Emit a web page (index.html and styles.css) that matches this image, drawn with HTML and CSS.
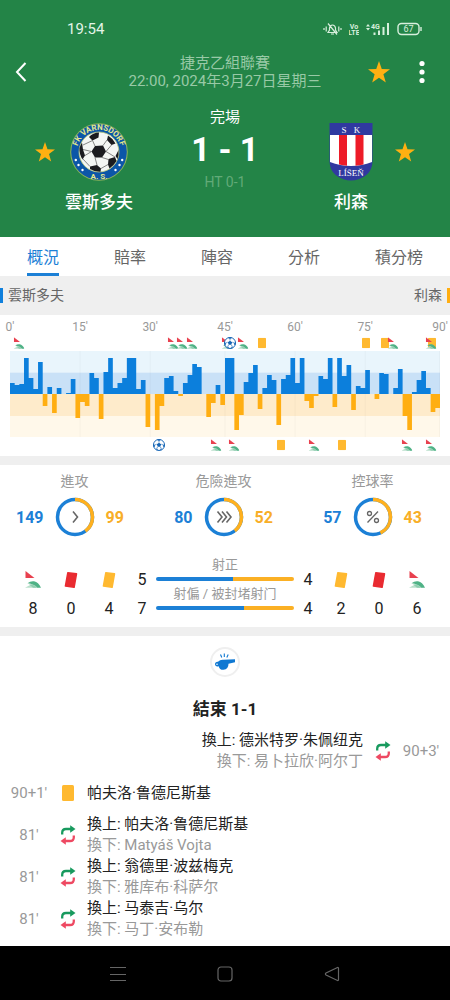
FILE: index.html
```html
<!DOCTYPE html>
<html lang="zh-Hant">
<head>
<meta charset="utf-8">
<meta name="viewport" content="width=device-width, initial-scale=1">
<title>雲斯多夫 1 - 1 利森</title>
<link rel="stylesheet" href="styles.css">
</head>
<body>
<svg class="sprite" aria-hidden="true">
  <symbol id="star" viewBox="0 0 20 20"><path fill="#feb012" d="M10 0l2.500 7.200 7.500.2-6 4.600 2.200 7.500L10 15.200 3.800 19.500 6 12 0 7.400l7.500-.2z"/></symbol>
  <symbol id="corner" viewBox="0 0 16 17">
    <path fill="#e8414f" d="M.5 0l9 7h-9z"/>
    <path fill="#b9dfcb" d="M0 16.800L7 13l7 3.800z"/>
    <path fill="#4fb286" d="M2.500 12.300Q5.500 9.800 9 10.300q4.500.8 7 6.500h-3.500Q9 13 2.500 12.300z"/>
    <path fill="#8fceb0" d="M4 13.200q5 .2 8 3.600H8z"/>
  </symbol>
  <symbol id="card" viewBox="0 0 12 16"><rect width="12" height="16" rx="1.500" fill="#ffb930"/></symbol>
  <symbol id="tilt-yellow" viewBox="0 0 14 18"><path fill="#ffb930" stroke="#ffb930" stroke-width="1.500" stroke-linejoin="round" d="M3.800 1.800l8.700 1-2.400 13.500-8.700-1.200z"/></symbol>
  <symbol id="tilt-red" viewBox="0 0 14 18"><path fill="#e92b31" stroke="#e92b31" stroke-width="1.500" stroke-linejoin="round" d="M3.800 1.800l8.700 1-2.400 13.500-8.700-1.200z"/></symbol>
  <symbol id="ball" viewBox="0 0 14 14">
    <circle cx="7" cy="7" r="6" fill="#fff" stroke="#1565b5" stroke-width="1"/>
    <path fill="#1565b5" d="M7 4.600l2.300 1.700-.9 2.700H5.600l-.9-2.700zM4.500 1.400L7 2.700l2.500-1.300L7 .8zM1 6l1.600 1L2.300 9.500 1 8.500zM13 6l-1.600 1 .3 2.500L13 8.500zM4 12.600l.5-1.900 2 1zM10 12.600l-.5-1.900-2 1z"/>
    <path stroke="#1565b5" stroke-width=".7" d="M7 4.400V2.500M4.500 6.200L2.500 7M9.500 6.200l2 .8M5.500 9.100l-1.100 1.800M8.500 9.100l1.100 1.800"/>
  </symbol>
  <symbol id="swap" viewBox="0 0 16 20">
    <path fill="none" stroke="#189a5e" stroke-width="2.300" d="M2.200 9.500V7.800Q2.200 4 6 4h5"/><path fill="#189a5e" d="M10.200.3l5.300 3.700-5.300 3.700z"/>
    <path fill="none" stroke="#ee4962" stroke-width="2.300" d="M13.800 10.500v1.700q0 3.800-3.800 3.800H5"/><path fill="#ee4962" d="M5.800 12.300L.5 16l5.300 3.700z"/>
  </symbol>
</svg>

<header class="hero">
  <div class="status">
    <span class="clock">19:54</span>
    <div class="status-icons">
      <svg width="19" height="14" viewBox="0 0 19 14" fill="none" stroke="#d8efdd" stroke-width="1.200"><path d="M1 6v2M3.200 4.500v5M18 6v2M15.800 4.500v5M5 10.500h9L12.500 8V6Q12 3 9.500 3T6.500 6v2zM8 12h3M5 1.500l9 11"/></svg>
      <svg class="tiny" width="10" height="14" viewBox="0 0 10 14"><text x="5" y="6.500">Vo</text><text x="5" y="13">LTE</text></svg>
      <svg class="tiny net" width="24" height="14" viewBox="0 0 24 14"><path d="M0 4.500L2 2l2 2.500zM0 6l2 2.500L4 6z"/><text x="9.500" y="7">4G</text><path d="M7.500 10.500h2V13h-2zM12 8.500h2V13h-2zM16.500 5h2v8h-2zM21 1h2v12h-2z"/></svg>
      <svg class="tiny battery" width="26" height="14" viewBox="0 0 26 14"><rect x="1" y="1.500" width="21" height="11" rx="3.500"/><path d="M24 5v4"/><text x="11.500" y="10.300">67</text></svg>
    </div>
  </div>
  <div class="toolbar">
    <button class="icon-btn back" aria-label="返回"><svg width="12" height="20" viewBox="0 0 12 20"><path d="M10.500 1L2 10l8.500 9" fill="none" stroke="#fff" stroke-width="2"/></svg></button>
    <div class="league"><div>捷克乙組聯賽</div><div>22:00, 2024年3月27日星期三</div></div>
    <div class="actions">
      <button class="icon-btn" aria-label="收藏"><svg width="22" height="22"><use href="#star"/></svg></button>
      <button class="icon-btn" aria-label="更多"><svg width="6" height="24" viewBox="0 0 6 24" fill="#fff"><circle cx="3" cy="3.500" r="2.600"/><circle cx="3" cy="12" r="2.600"/><circle cx="3" cy="20.500" r="2.600"/></svg></button>
    </div>
  </div>
  <div class="match">
    <button class="icon-btn fav" aria-label="收藏雲斯多夫"><svg width="20" height="20"><use href="#star"/></svg></button>
    <div class="team">
      <svg class="crest" width="58" height="58" viewBox="0 0 58 58">
        <circle cx="29" cy="29" r="28.800" fill="#8fb35c"/><circle cx="29" cy="29" r="27.800" fill="#0c56a8"/>
        <circle cx="29" cy="29" r="20" fill="#f4f6f4" stroke="#b9c878" stroke-width=".8"/>
        <g fill="#1b1b1f"><path d="M25 23l8-.5 3 6-4 6h-7l-3.500-6z"/><path d="M19 14q4-4.500 10-4.500l-.5 5-6 3zM38 12.500q5 3 7.500 8l-4 1.500-4.500-5zM9.500 25q1-3 2.500-5.500l1 7 2 6-2.500 4Q9 31 9.500 25zM48.500 27q.5 5-1 9l-2-3zM38.500 36l6.500-2 1.500 4q-3 5-7 7.500l-1.500-4zM20 43.500l7-1.500 4 3.500-.5 3.200q-6 .3-10.500-2.700z"/></g>
        <path stroke="#555" stroke-width=".7" fill="none" d="M25 23l-2.500-5.500M33 22.500l4-5.500M36 28.500l5.500-6.500M36 28.500l9 5.500M32 34.500l6.500 2M25 34.500L27 42M21.500 28.500L15 32.500M21.500 28.500L13 26.500M22.500 17.500L13 22M20 43.500l-7.500-8M31 45.500l7-4"/>
        <path id="ring-top" fill="none" d="M9.600 39.300a22 22 0 1 1 38.800 0"/>
        <text class="crest-text"><textPath href="#ring-top" startOffset="50%">FK VARNSDORF</textPath></text>
        <text class="crest-text" x="29" y="55.500">A. S.</text>
        <g fill="#fff"><circle cx="5.800" cy="37" r="1.200"/><circle cx="8.500" cy="42" r="1.200"/><circle cx="12.500" cy="47" r="1.200"/><circle cx="52.200" cy="37" r="1.200"/><circle cx="49.500" cy="42" r="1.200"/><circle cx="45.500" cy="47" r="1.200"/></g>
      </svg>
      <div class="team-name">雲斯多夫</div>
    </div>
    <div class="result">
      <div class="state">完場</div>
      <div class="score">1 - 1</div>
      <div class="half">HT 0-1</div>
    </div>
    <div class="team">
      <svg class="crest" width="44" height="58" viewBox="0 0 44 58">
        <path fill="#3039a0" d="M.5 0h43v39q-1 13-14 17.200-7.500 2.500-15 0Q1.500 52 .5 39z"/>
        <path fill="#fff" d="M1 12h42v27q-10 4-21 4T1 39z"/>
        <path fill="#ed1b28" d="M10 12h8v30.700q-4-.3-8-1.200zM26.500 12h8v29.500q-4 1-8 1.200z"/>
        <text class="shield-text" x="15" y="9.500">S</text><text class="shield-text" x="28" y="9.500">K</text>
        <text class="shield-text" x="22" y="52.500">LÍŠEŇ</text>
      </svg>
      <div class="team-name">利森</div>
    </div>
    <button class="icon-btn fav" aria-label="收藏利森"><svg width="20" height="20"><use href="#star"/></svg></button>
  </div>
</header>

<nav class="tabs">
  <a href="#" class="active" aria-current="page">概況</a><a href="#">賠率</a><a href="#">陣容</a><a href="#">分析</a><a href="#">積分榜</a>
</nav>

<main>
  <div class="sides"><span class="side home">雲斯多夫</span><span class="side guest">利森</span></div>

  <section class="momentum">
    <div class="track labels">
      <span style="left:0%">0'</span><span style="left:16.3%">15'</span><span style="left:32.6%">30'</span><span style="left:50%">45'</span><span style="left:66.3%">60'</span><span style="left:82.6%">75'</span><span style="left:100%">90'</span>
    </div>
    <div class="track marks">
      <svg class="m-corner" style="left:2.1%"><use href="#corner"/></svg>
      <svg class="m-corner" style="left:37.9%"><use href="#corner"/></svg>
      <svg class="m-corner" style="left:40.1%"><use href="#corner"/></svg>
      <svg class="m-corner" style="left:42.3%"><use href="#corner"/></svg>
      <svg class="m-corner" style="left:50.5%"><use href="#corner"/></svg>
      <svg class="m-ball" style="left:51.1%"><use href="#ball"/></svg>
      <svg class="m-corner" style="left:54.3%"><use href="#corner"/></svg>
      <svg class="m-card" style="left:58.7%"><use href="#card"/></svg>
      <svg class="m-card" style="left:82.7%"><use href="#card"/></svg>
      <svg class="m-card" style="left:87.1%"><use href="#card"/></svg>
      <svg class="m-corner" style="left:89.1%"><use href="#corner"/></svg>
      <svg class="m-card" style="left:98.1%"><use href="#card"/></svg>
      <svg class="m-corner" style="left:97.9%"><use href="#corner"/></svg>
    </div>
    <svg class="plot" viewBox="0 0 92 86" preserveAspectRatio="none" role="img" aria-label="進攻走勢">
      <path fill="#e9f5fc" d="M0 0h92v21.500H0z"/><path fill="#c9e1f7" d="M0 21.500h92V43H0z"/>
      <path fill="#feebcb" d="M0 43h92v22H0z"/><path fill="#fff8ea" d="M0 65h92v21H0z"/>
      <path stroke="#000" stroke-opacity=".06" stroke-width=".2" d="M15 0v86M30 0v86M46 0v86M61 0v86M76 0v86M91.900 0v86"/>
      <path fill="#0c7fdc" d="M0 43V32h1V34h1V33h1V7h1V27h1V38h1V11h1V43h1V36h1V43h1V37h1V43h1V42h1V28h1V43h3V22h1V27h1V43h1V21h1V7h1V37h1V32h1V27h1V7h2V38h1V29h1V43h4V27h1V25h1V40h1V43h1V32h1V24h1V13h1V16h1V43h3V34h1V43h1V7h2V43h2V31h1V22h1V14h1V43h1V37h1V24h1V29h1V43h1V28h1V24h1V7h1V32h1V7h1V43h3V25h1V28h1V7h1V43h1V7h1V25h1V14h1V43h1V35h1V37h1V19h1V43h2V22h1V23h1V43h1V37h1V18h1V43h2V41h1V29h1V20h1V37h1V43z"/>
      <path fill="#ffae12" d="M7 43v12h1V43h1v19h1V43h4v24h1V51h1v4h1V43h2v25h1V43h9v33h1V43h1v36h1V55h1V43h3v2h1V43h5v23h1V52h1V43h1v11h1V43h2v36h1V64h1V43h3v15h1V43h3v31h1V43h5v7h1v7h1V45h1V43h3v13h1V43h3v16h1V43h4v5h1V43h5v22h1v14h1V43h4v18h1v-4h1V43z"/>
    </svg>
    <div class="track marks">
      <svg class="m-ball" style="left:34.7%"><use href="#ball"/></svg>
      <svg class="m-corner" style="left:47.9%"><use href="#corner"/></svg>
      <svg class="m-corner" style="left:52.1%"><use href="#corner"/></svg>
      <svg class="m-card" style="left:63%"><use href="#card"/></svg>
      <svg class="m-corner" style="left:70.7%"><use href="#corner"/></svg>
      <svg class="m-card" style="left:77.2%"><use href="#card"/></svg>
      <svg class="m-corner" style="left:92.4%"><use href="#corner"/></svg>
      <svg class="m-corner" style="left:97.9%"><use href="#corner"/></svg>
    </div>
  </section>

  <section class="stats">
    <div class="rings">
      <div class="stat"><h3>進攻</h3><b class="h">149</b>
        <svg class="ring" viewBox="0 0 40 40"><circle class="base" cx="20" cy="20" r="17.500"/><circle class="part" cx="20" cy="20" r="17.500" pathLength="100" stroke-dasharray="39.900 100"/><path class="glyph" d="M18 14.500l4.500 5.500-4.500 5.500"/></svg>
        <b class="a">99</b></div>
      <div class="stat"><h3>危險進攻</h3><b class="h">80</b>
        <svg class="ring" viewBox="0 0 40 40"><circle class="base" cx="20" cy="20" r="17.500"/><circle class="part" cx="20" cy="20" r="17.500" pathLength="100" stroke-dasharray="39.400 100"/><path class="glyph" d="M13.500 14.500l4.500 5.500-4.500 5.500M18 14.500l4.500 5.500-4.500 5.500M22.500 14.500L27 20l-4.500 5.500"/></svg>
        <b class="a">52</b></div>
      <div class="stat"><h3>控球率</h3><b class="h">57</b>
        <svg class="ring" viewBox="0 0 40 40"><circle class="base" cx="20" cy="20" r="17.500"/><circle class="part" cx="20" cy="20" r="17.500" pathLength="100" stroke-dasharray="43 100"/><path class="glyph thin" d="M25 14.500l-10.500 11"/><circle class="glyph thin" cx="16.500" cy="16.500" r="2"/><circle class="glyph thin" cx="23.500" cy="23.500" r="2"/></svg>
        <b class="a">43</b></div>
    </div>
    <div class="counts">
      <div class="count"><i><svg width="16" height="17"><use href="#corner"/></svg></i><span>8</span></div>
      <div class="count"><i><svg width="14" height="18"><use href="#tilt-red"/></svg></i><span>0</span></div>
      <div class="count"><i><svg width="14" height="18"><use href="#tilt-yellow"/></svg></i><span>4</span></div>
      <div class="count"><span>5</span><span>7</span></div>
      <div class="shots">
        <div class="shot"><div class="shot-label">射正</div><div class="bar"><span class="bh" style="flex-grow:5"></span><span class="ba" style="flex-grow:4"></span></div></div>
        <div class="shot"><div class="shot-label">射偏 / 被封堵射门</div><div class="bar"><span class="bh" style="flex-grow:7"></span><span class="ba" style="flex-grow:4"></span></div></div>
      </div>
      <div class="count"><span>4</span><span>4</span></div>
      <div class="count"><i><svg width="14" height="18"><use href="#tilt-yellow"/></svg></i><span>2</span></div>
      <div class="count"><i><svg width="14" height="18"><use href="#tilt-red"/></svg></i><span>0</span></div>
      <div class="count"><i><svg width="16" height="17"><use href="#corner"/></svg></i><span>6</span></div>
    </div>
  </section>

  <section class="events">
    <div class="whistle"><svg width="22" height="18" viewBox="0 0 22 18"><path fill="#0f78d2" d="M1 11.500Q1 8.500 4 8.700 6 6.500 9.500 6.800L21 6.300v3l-6.500 1.500q0 5.500-5 6Q5.500 17 4.700 13.200 1.500 14 1 11.500z"/><circle cx="3" cy="11.300" r=".8" fill="#fff"/><path stroke="#0f78d2" stroke-width="1.100" d="M6.500 1.500l1.300 3M10.300.5v3.500M14.200 1.500l-1.400 3"/></svg></div>
    <h2>結束 1-1</h2>
    <div class="event away"><span class="time">90+3'</span><svg class="ev-icon" width="16" height="20"><use href="#swap"/></svg><div class="who"><div>換上: 德米特罗·朱佩纽克</div><div class="out">換下: 易卜拉欣·阿尔丁</div></div></div>
    <div class="event single"><span class="time">90+1'</span><svg class="ev-icon" width="12" height="16"><use href="#card"/></svg><div class="who"><div>帕夫洛·鲁德尼斯基</div></div></div>
    <div class="event"><span class="time">81'</span><svg class="ev-icon" width="16" height="20"><use href="#swap"/></svg><div class="who"><div>換上: 帕夫洛·鲁德尼斯基</div><div class="out">換下: Matyáš Vojta</div></div></div>
    <div class="event"><span class="time">81'</span><svg class="ev-icon" width="16" height="20"><use href="#swap"/></svg><div class="who"><div>換上: 翁德里·波兹梅克</div><div class="out">換下: 雅库布·科萨尔</div></div></div>
    <div class="event"><span class="time">81'</span><svg class="ev-icon" width="16" height="20"><use href="#swap"/></svg><div class="who"><div>換上: 马泰吉·乌尔</div><div class="out">換下: 马丁·安布勒</div></div></div>
  </section>
</main>

<footer class="system">
  <button class="icon-btn" aria-label="選單"><svg width="16" height="16" viewBox="0 0 16 16"><path d="M0 1.500h16M0 8.500h16M0 14.500h16"/></svg></button>
  <button class="icon-btn" aria-label="主畫面"><svg width="16" height="16" viewBox="0 0 16 16"><rect x="1" y="1" width="14" height="14" rx="3"/></svg></button>
  <button class="icon-btn" aria-label="上一頁"><svg width="16" height="16" viewBox="0 0 16 16"><path d="M13.500 1.500L2 7q-1.200 1 0 2l11.500 5.500q1 .2 1-1v-11q0-1.200-1-1z"/></svg></button>
</footer>
</body>
</html>
```
FILE: styles.css
```css
* { box-sizing: border-box; }
body {
  margin: 0;
  min-height: 100vh;
  display: flex;
  flex-direction: column;
  background: #fff;
  color: #222;
  font-family: Roboto, "Noto Sans CJK TC", "Noto Sans CJK SC", sans-serif;
  font-size: 15px;
}
svg { display: block; }
.sprite { position: absolute; width: 0; height: 0; }
h2, h3 { margin: 0; }
.icon-btn { display: block; margin: 0; padding: 0; border: 0; background: none; }

.hero { background: #238447; color: #fff; padding-bottom: 23px; }
.status {
  display: flex;
  align-items: center;
  justify-content: space-between;
  padding: 14px 27px 0 67px;
  line-height: 30px;
  color: #e4f5e8;
}
.status-icons { display: flex; align-items: center; gap: 7px; }
.tiny { fill: #d8efdd; font-size: 7px; font-weight: 700; text-anchor: middle; }
.battery { font-size: 9px; font-weight: 400; }
.battery rect, .battery path { fill: none; stroke: #d8efdd; stroke-width: 1.4px; }

.toolbar {
  display: grid;
  grid-template-columns: 1fr auto 1fr;
  align-items: center;
  padding: 10px 25px 0;
}
.league { text-align: center; line-height: 18px; color: #98c9a6; }
.actions { display: flex; align-items: center; justify-content: flex-end; gap: 29px; }
.back { margin-left: -10px; }

.match {
  display: grid;
  grid-template-columns: 20px 68px 1fr 68px 20px;
  gap: 10px;
  padding: 16px 35px 0;
}
.fav { align-self: start; margin-top: 36px; }
.team { padding-top: 17px; text-align: center; }
.crest { margin: 0 auto; }
.crest-text { fill: #e6e98a; font-size: 8px; font-weight: 700; text-anchor: middle; }
.shield-text { fill: #fff; font-family: "Liberation Serif", serif; font-size: 9px; text-anchor: middle; }
.team-name { margin-top: 9px; font-size: 17px; font-weight: 500; line-height: 24px; white-space: nowrap; }
.result { text-align: center; }
.state { line-height: 22px; }
.score { font-size: 33px; font-weight: 700; line-height: 44px; }
.half { font-size: 14px; line-height: 20px; color: #62aa78; }

.tabs { display: flex; justify-content: space-between; padding: 0 27px; }
.tabs a {
  padding: 9px 0 3px;
  border-bottom: 3px solid transparent;
  font-size: 16px;
  line-height: 24px;
  color: #666;
  text-decoration: none;
}
.tabs .active { color: #1c80d6; border-color: #1c80d6; }

main { flex: 1; }
.sides {
  display: flex;
  align-items: center;
  justify-content: space-between;
  padding: 12px 0;
  background: #efefef;
  font-size: 14px;
  color: #666;
}
.side { line-height: 15px; }
.home { border-left: 3px solid #1080dc; padding-left: 5px; }
.guest { border-right: 3px solid #ffae12; padding-right: 5px; }

.momentum { padding: 4px 10px 3px; }
.track { position: relative; height: 16px; }
.track > * { position: absolute; transform: translateX(-50%); }
.labels { font-size: 12px; line-height: 16px; color: #999; }
.marks > svg { top: 50%; transform: translate(-50%, -50%); }
.m-corner { width: 11px; height: 12px; }
.m-ball { width: 13px; height: 13px; }
.m-card { width: 8px; height: 11px; }
.plot { width: 100%; height: 86px; }

.stats { border-top: 9px solid #efefef; padding: 6px 0 4px; }
.rings { display: grid; grid-template-columns: repeat(3, 1fr); padding-right: 3px; }
.stat {
  display: grid;
  grid-template-columns: 1fr 40px 1fr;
  column-gap: 11px;
  row-gap: 6px;
  align-items: center;
  font-size: 16px;
}
.stat h3 {
  grid-column: 1 / -1;
  text-align: center;
  font-size: 14px;
  font-weight: 400;
  line-height: 20px;
  color: #999;
}
.h { text-align: right; color: #1c80d6; }
.a { color: #f8ae27; }
.ring { width: 40px; height: 40px; fill: none; }
.base { stroke: #1c80d6; stroke-width: 3.5px; }
.part { stroke: #ffb01e; stroke-width: 3.5px; transform: rotate(-90deg); transform-origin: 50% 50%; }
.glyph { stroke: #666; stroke-width: 1.6px; }
.thin { stroke-width: 1.3px; }

.counts {
  display: grid;
  grid-template-columns: repeat(3, 38px) 28px 1fr 28px repeat(3, 38px);
  padding: 18px 14px 0;
}
.count { padding-top: 10px; text-align: center; font-size: 16px; line-height: 29px; }
.count span { display: block; }
.count i { display: flex; height: 29px; align-items: center; justify-content: center; }
.shot { padding-bottom: 3px; }
.shot-label { text-align: center; font-size: 13px; line-height: 20px; color: #999; white-space: nowrap; }
.bar { display: flex; height: 4px; margin-top: 2px; border-radius: 2px; overflow: hidden; }
.bh { background: #1c80d6; }
.ba { background: #fbb024; }

.events { border-top: 9px solid #efefef; padding: 11px 0 6px; }
.whistle {
  display: flex;
  align-items: center;
  justify-content: center;
  width: 30px;
  height: 30px;
  margin: 0 auto;
  border: 2px solid #efefef;
  border-radius: 50%;
}
.events h2 { margin: 20px 0 9px; text-align: center; font-size: 17px; font-weight: 700; line-height: 24px; }
.event {
  display: grid;
  grid-template-columns: 58px 19px 1fr;
  align-items: center;
  line-height: 21px;
}
.single { min-height: 42px; }
.time { text-align: center; color: #999; }
.ev-icon { margin: 0 auto; }
.who { padding-left: 10px; }
.out { color: #999; }
.away { grid-template-columns: 1fr 19px 58px; }
.away .time { grid-column: 3; grid-row: 1; }
.away .ev-icon { grid-column: 2; grid-row: 1; }
.away .who { grid-column: 1; grid-row: 1; padding: 0 10px 0 0; text-align: right; }

.system {
  display: flex;
  align-items: center;
  justify-content: center;
  gap: 91px;
  height: 55px;
  background: #000;
}
.system svg { fill: none; stroke: #666; stroke-width: 1.2px; }
```
